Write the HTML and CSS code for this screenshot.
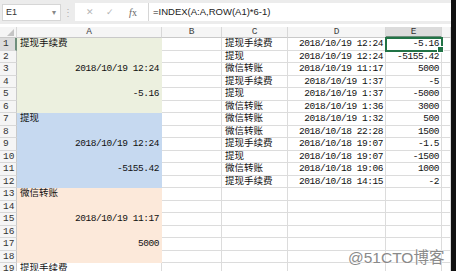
FILE: index.html
```html
<!DOCTYPE html>
<html>
<head>
  <meta charset="utf-8">
  <title>Sheet1</title>
  <link rel="stylesheet" href="styles.css">
</head>
<body>
<div class="window">
  <div class="main">
    <div class="formula-bar">
      <div class="name-box"><span>E1</span><span class="arrow">▾</span></div>
      <div class="grip">⋮</div>
      <div class="buttons">
        <span class="btn">✕</span>
        <span class="btn">✓</span>
        <span class="btn fx"><i>f</i>x</span>
      </div>
      <div class="formula">=INDEX(A:A,ROW(A1)*6-1)</div>
    </div>

    <div class="sheet">
      <div class="h corner"><span class="tri"></span></div>
      <div class="h">A</div><div class="h">B</div><div class="h">C</div><div class="h">D</div><div class="h on">E</div><div class="h"></div>

      <div class="rh on">1</div><div class="c g cn">提现手续费</div><div class="c"></div><div class="c cn">提现手续费</div><div class="c r">2018/10/19 12:24</div><div class="c r sel">-5.16</div><div class="c"></div>
      <div class="rh">2</div><div class="c g"></div><div class="c"></div><div class="c cn">提现</div><div class="c r">2018/10/19 12:24</div><div class="c r">-5155.42</div><div class="c"></div>
      <div class="rh">3</div><div class="c g r">2018/10/19 12:24</div><div class="c"></div><div class="c cn">微信转账</div><div class="c r">2018/10/19 11:17</div><div class="c r">5000</div><div class="c"></div>
      <div class="rh">4</div><div class="c g"></div><div class="c"></div><div class="c cn">提现手续费</div><div class="c r">2018/10/19 1:37</div><div class="c r">-5</div><div class="c"></div>
      <div class="rh">5</div><div class="c g r">-5.16</div><div class="c"></div><div class="c cn">提现</div><div class="c r">2018/10/19 1:37</div><div class="c r">-5000</div><div class="c"></div>
      <div class="rh">6</div><div class="c g"></div><div class="c"></div><div class="c cn">微信转账</div><div class="c r">2018/10/19 1:36</div><div class="c r">3000</div><div class="c"></div>
      <div class="rh">7</div><div class="c b cn">提现</div><div class="c"></div><div class="c cn">微信转账</div><div class="c r">2018/10/19 1:32</div><div class="c r">500</div><div class="c"></div>
      <div class="rh">8</div><div class="c b"></div><div class="c"></div><div class="c cn">微信转账</div><div class="c r">2018/10/18 22:28</div><div class="c r">1500</div><div class="c"></div>
      <div class="rh">9</div><div class="c b r">2018/10/19 12:24</div><div class="c"></div><div class="c cn">提现手续费</div><div class="c r">2018/10/18 19:07</div><div class="c r">-1.5</div><div class="c"></div>
      <div class="rh">10</div><div class="c b"></div><div class="c"></div><div class="c cn">提现</div><div class="c r">2018/10/18 19:07</div><div class="c r">-1500</div><div class="c"></div>
      <div class="rh">11</div><div class="c b r">-5155.42</div><div class="c"></div><div class="c cn">微信转账</div><div class="c r">2018/10/18 19:06</div><div class="c r">1000</div><div class="c"></div>
      <div class="rh">12</div><div class="c b"></div><div class="c"></div><div class="c cn">提现手续费</div><div class="c r">2018/10/18 14:15</div><div class="c r">-2</div><div class="c"></div>
      <div class="rh">13</div><div class="c o cn">微信转账</div><div class="c"></div><div class="c"></div><div class="c"></div><div class="c"></div><div class="c"></div>
      <div class="rh">14</div><div class="c o"></div><div class="c"></div><div class="c"></div><div class="c"></div><div class="c"></div><div class="c"></div>
      <div class="rh">15</div><div class="c o r">2018/10/19 11:17</div><div class="c"></div><div class="c"></div><div class="c"></div><div class="c"></div><div class="c"></div>
      <div class="rh">16</div><div class="c o"></div><div class="c"></div><div class="c"></div><div class="c"></div><div class="c"></div><div class="c"></div>
      <div class="rh">17</div><div class="c o r">5000</div><div class="c"></div><div class="c"></div><div class="c"></div><div class="c"></div><div class="c"></div>
      <div class="rh">18</div><div class="c o"></div><div class="c"></div><div class="c"></div><div class="c"></div><div class="c"></div><div class="c"></div>
      <div class="rh">19</div><div class="c cn">提现手续费</div><div class="c"></div><div class="c"></div><div class="c"></div><div class="c"></div><div class="c"></div>
    </div>

    <div class="watermark">@51CTO博客</div>
  </div>
  <div class="edge"></div>
</div>
</body>
</html>
```

FILE: styles.css
```css
* {
  box-sizing: border-box;
}

body {
  margin: 0;
  background: #000;
}

.window {
  display: flex;
  width: 456px;
  height: 271px;
  overflow: hidden;
}

.main {
  position: relative;
  width: 451px;
  flex: none;
  background: #fff;
  overflow: hidden;
}

.edge {
  flex: 1;
  background: #111;
}

/* formula bar */
.formula-bar {
  display: flex;
  align-items: center;
  height: 24px;
  padding-left: 2px;
  background: #ececec;
  font-family: "Liberation Sans", Arial, sans-serif;
  font-size: 9px;
  color: #333;
}

.name-box {
  display: flex;
  align-items: center;
  justify-content: space-between;
  width: 59px;
  height: 17px;
  padding: 0 4px 0 3px;
  background: #fff;
  border: 1px solid #d6d6d6;
}

.arrow {
  color: #888;
  font-size: 8px;
}

.grip {
  width: 14px;
  text-align: center;
  color: #b0b0b0;
  font-size: 10px;
}

.buttons {
  display: flex;
  align-items: center;
  width: 73px;
  height: 18px;
  padding-left: 10px;
  background: #fff;
}

.btn {
  width: 10px;
  margin-right: 10px;
  text-align: center;
  color: #b5b5b5;
  font-size: 9px;
}

.btn.fx {
  margin-left: 3px;
  color: #666;
  font-family: "Liberation Serif", serif;
  font-size: 10px;
}

.formula {
  flex: 1;
  height: 18px;
  line-height: 18px;
  padding-left: 4px;
  background: #fff;
  border-left: 1px solid #d6d6d6;
  color: #222;
  font-size: 9.5px;
}

/* grid */
.sheet {
  display: grid;
  grid-template-columns: 17px 145px 60px 66px 98px 56px 9px;
  grid-template-rows: 11px;
  grid-auto-rows: 12.5px;
  margin-top: 3px;
  font-family: "Liberation Mono", "Noto Sans CJK SC", monospace;
  font-size: 9.5px;
  color: #111;
}

.h {
  background: #f5f5f5;
  border-right: 1px solid #d8d8d8;
  border-bottom: 1px solid #c9c9c9;
  text-align: center;
  line-height: 10px;
  color: #444;
}

.h.on {
  background: #dcdcdc;
  border-bottom: 2px solid #6f8f7c;
  color: #333;
}

.corner {
  display: flex;
  align-items: flex-end;
  justify-content: flex-end;
  padding: 0 2px 1px 0;
}

.tri {
  width: 0;
  height: 0;
  border-left: 7px solid transparent;
  border-bottom: 7px solid #c4c4c4;
}

.rh {
  padding-left: 3px;
  background: #f5f5f5;
  border-right: 1px solid #c9c9c9;
  border-bottom: 1px solid #d8d8d8;
  line-height: 12px;
  color: #333;
}

.rh.on {
  background: #dcdcdc;
  border-right: 2px solid #6f8f7c;
}

.c {
  padding: 0 2px 0 3px;
  border-right: 1px solid #dcdcdc;
  border-bottom: 1px solid #dcdcdc;
  line-height: 12px;
  white-space: nowrap;
  letter-spacing: -0.45px;
}

.cn {
  font-size: 9.5px;
  letter-spacing: 0;
}

.r {
  text-align: right;
}

.g {
  background: #ecf0df;
  border-color: #ecf0df;
}

.b {
  background: #c6d9f0;
  border-color: #c6d9f0;
}

.o {
  background: #fce9da;
  border-color: #fce9da;
}

.sel {
  position: relative;
  outline: 2px solid #217346;
  outline-offset: -1px;
}

.sel::after {
  content: "";
  position: absolute;
  right: -3px;
  bottom: -3px;
  width: 5px;
  height: 5px;
  background: #217346;
  border: 1px solid #fff;
}

.watermark {
  position: absolute;
  left: 348px;
  top: 245px;
  font-family: "Liberation Sans", "Noto Sans CJK SC", sans-serif;
  font-size: 15.5px;
  color: #8a8a8a;
  text-shadow: 0 0 1px #fff, 0 0 2px #fff;
}
```
